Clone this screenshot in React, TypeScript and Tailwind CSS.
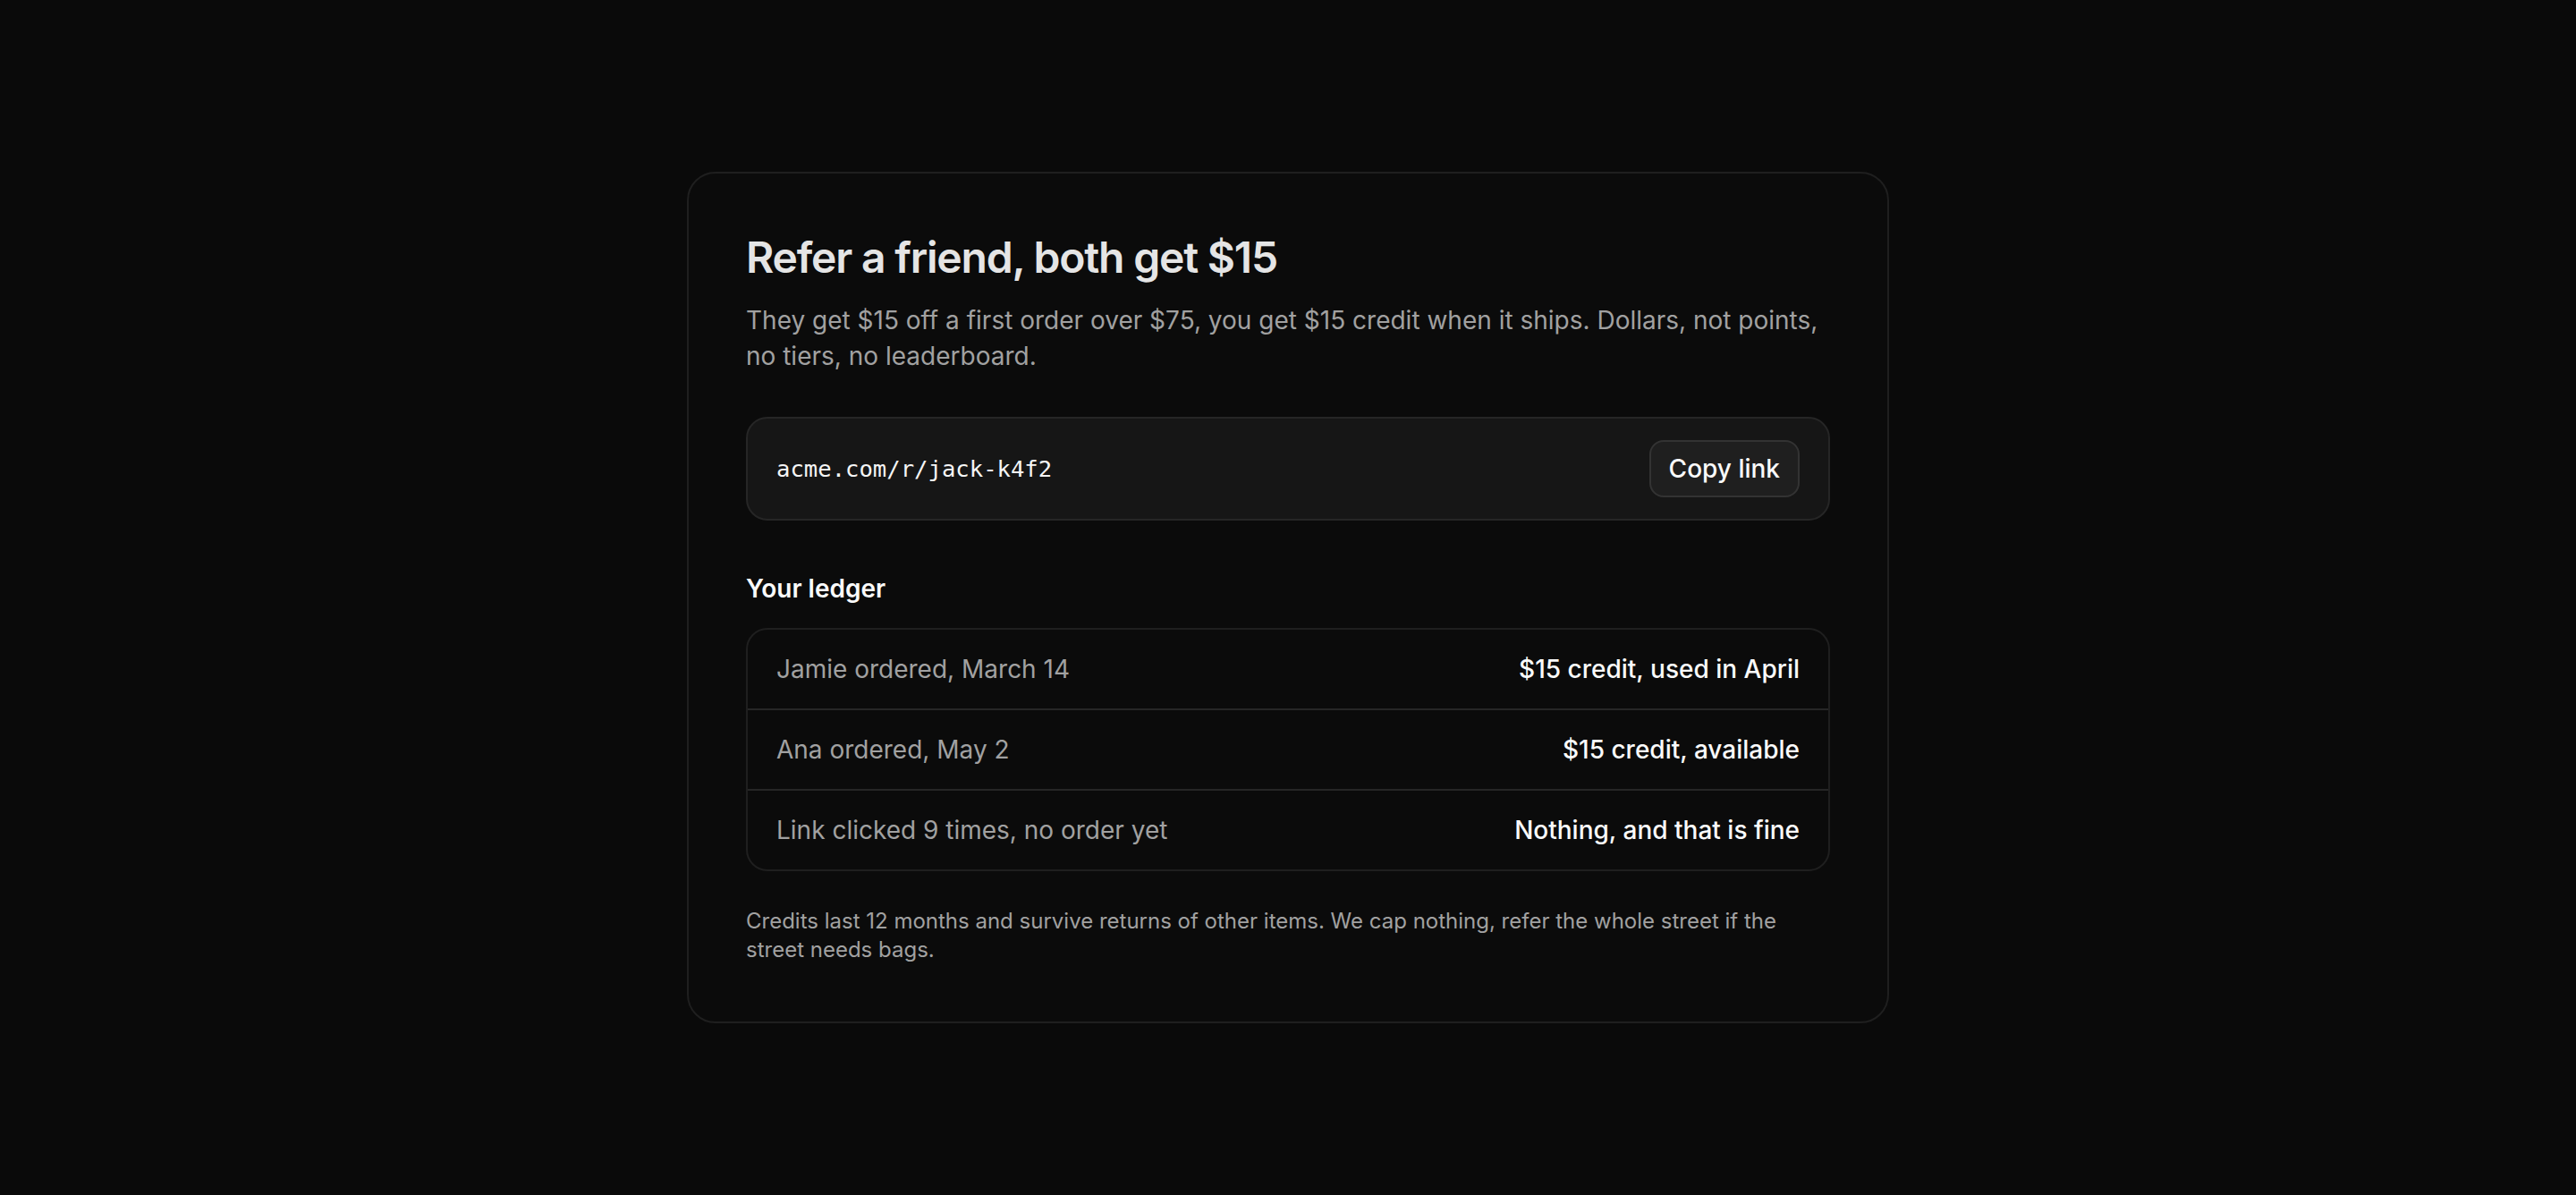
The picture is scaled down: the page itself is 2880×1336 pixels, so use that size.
import React from 'react'

type LedgerEntry = {
  id: string
  label: string
  value: string
}

const ledger: LedgerEntry[] = [
  { id: 'jamie', label: 'Jamie ordered, March 14', value: '$15 credit, used in April' },
  { id: 'ana', label: 'Ana ordered, May 2', value: '$15 credit, available' },
  { id: 'clicks', label: 'Link clicked 9 times, no order yet', value: 'Nothing, and that is fine' },
]

function LedgerRow({ entry }: { entry: LedgerEntry }) {
  return (
    <li className="flex items-center justify-between gap-4 px-4 py-3 text-sm leading-5">
      <span className="text-neutral-400">{entry.label}</span>
      <span className="font-medium text-neutral-50">{entry.value}</span>
    </li>
  )
}

function ReferralLink({ url }: { url: string }) {
  return (
    <div className="flex items-center justify-between rounded-xl border border-[#262626] bg-[#161616] px-4 py-3">
      <code className="font-['DejaVu_Sans_Mono',monospace] text-[12.8px] text-neutral-100">{url}</code>
      <button
        type="button"
        className="rounded-lg border border-[#333333] bg-[#1f1f1f] px-2.5 py-[5px] text-sm leading-5 font-medium text-neutral-50"
      >
        Copy link
      </button>
    </div>
  )
}

export default function App(): React.ReactElement {
  return (
    <div className="flex min-h-screen items-center justify-center bg-[#0a0a0a] font-['Inter','Noto_Sans',sans-serif] antialiased">
      <section className="w-[672px] rounded-2xl border border-[#1f1f1f] bg-[#0b0b0b] p-8 [zoom:2]">
        <h1 className="text-2xl leading-[30px] font-semibold tracking-tight text-neutral-200">
          Refer a friend, both get $15
        </h1>
        <p className="mt-2.5 text-sm leading-5 text-neutral-400">
          They get $15 off a first order over $75, you get $15 credit when it ships. Dollars, not
          points, no tiers, no leaderboard.
        </p>

        <div className="mt-6">
          <ReferralLink url="acme.com/r/jack-k4f2" />
        </div>

        <h2 className="mt-7 text-sm leading-5 font-semibold text-neutral-50">Your ledger</h2>
        <ul className="mt-3 divide-y divide-[#262626] rounded-xl border border-[#1f1f1f]">
          {ledger.map((entry) => (
            <LedgerRow key={entry.id} entry={entry} />
          ))}
        </ul>

        <p className="mt-5 text-xs leading-4 text-neutral-400">
          Credits last 12 months and survive returns of other items. We cap nothing, refer the whole
          street if the street needs bags.
        </p>
      </section>
    </div>
  )
}
